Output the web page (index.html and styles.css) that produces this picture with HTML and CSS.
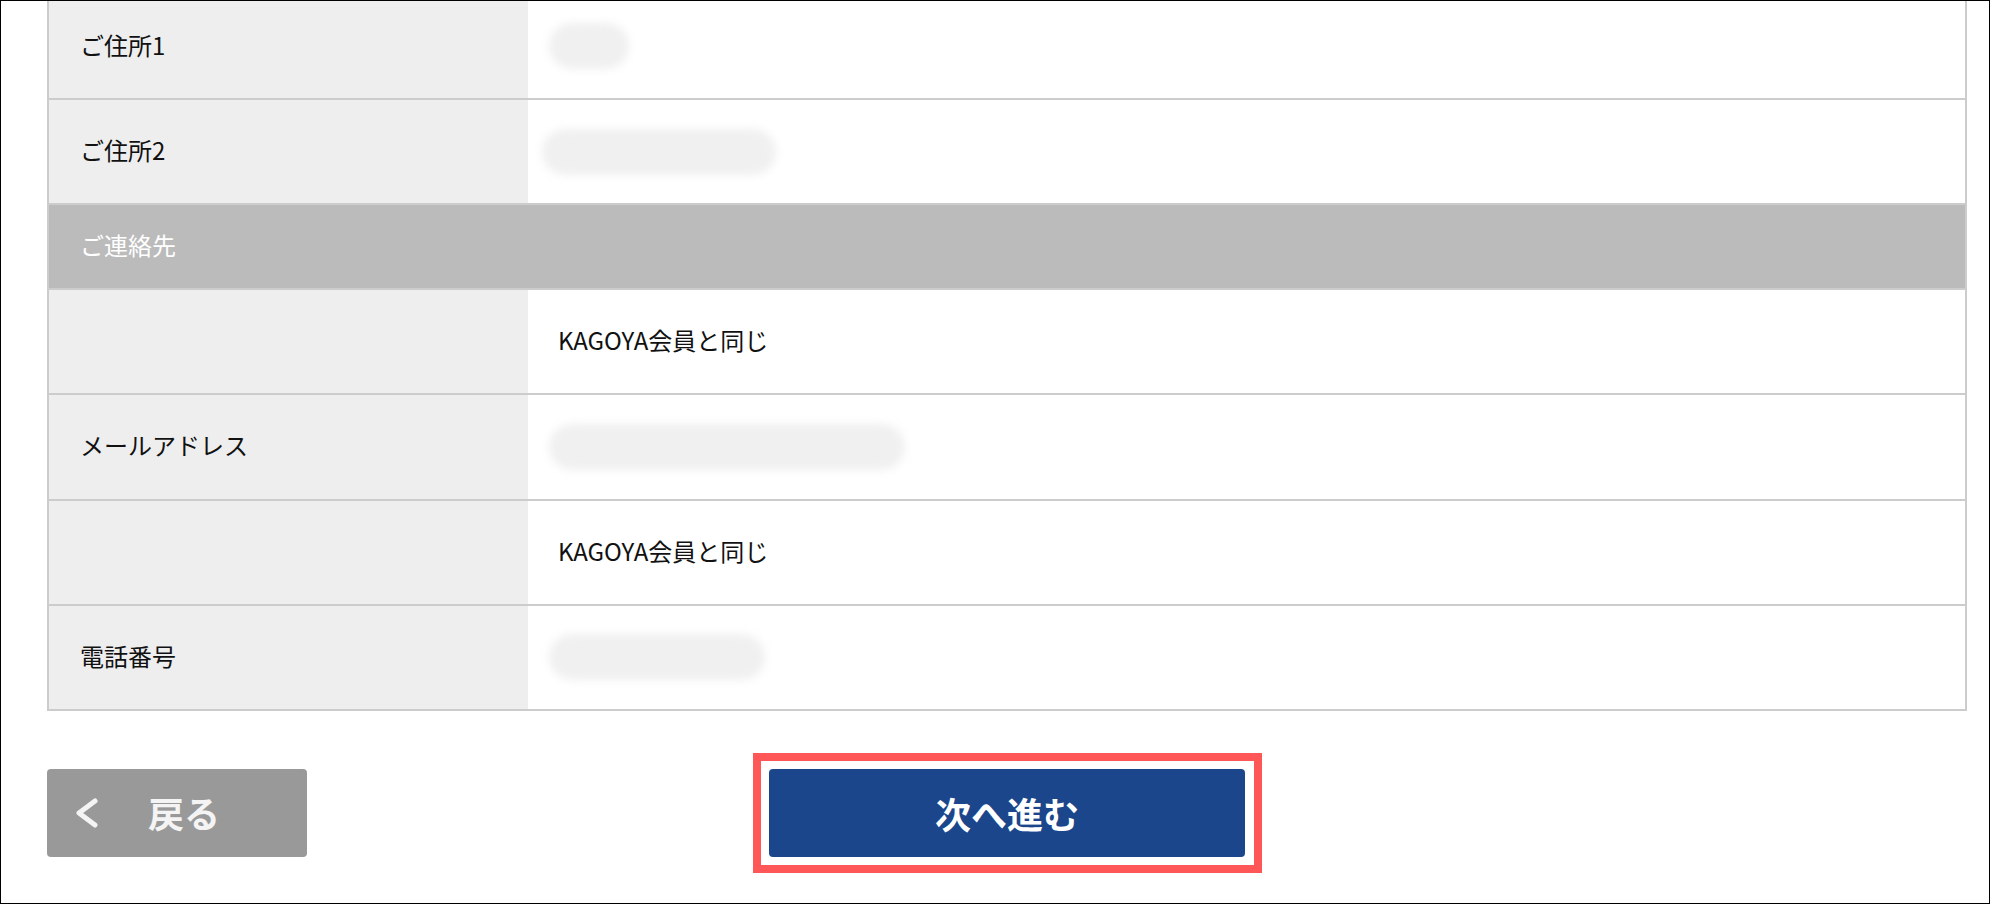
FILE: index.html
```html
<!DOCTYPE html>
<html lang="ja">
<head>
<meta charset="utf-8">
<title>ご連絡先の確認</title>
<link rel="stylesheet" href="styles.css">
</head>
<body>
<div class="screen">
  <div class="form-table">
    <div class="row">
      <div class="label">ご住所1</div>
      <div class="value"><span class="blur blur-addr1"></span></div>
    </div>
    <div class="row">
      <div class="label">ご住所2</div>
      <div class="value"><span class="blur blur-addr2"></span></div>
    </div>
    <div class="section">ご連絡先</div>
    <div class="row">
      <div class="label"></div>
      <div class="value">KAGOYA会員と同じ</div>
    </div>
    <div class="row">
      <div class="label">メールアドレス</div>
      <div class="value"><span class="blur blur-mail"></span></div>
    </div>
    <div class="row">
      <div class="label"></div>
      <div class="value">KAGOYA会員と同じ</div>
    </div>
    <div class="row">
      <div class="label">電話番号</div>
      <div class="value"><span class="blur blur-tel"></span></div>
    </div>
  </div>
  <div class="actions">
    <button class="btn btn-back" type="button">
      <svg class="chev" width="26" height="32" viewBox="0 0 26 32" aria-hidden="true"><polyline points="21,4 5,16 21,28" fill="none" stroke="#f4f4f4" stroke-width="5" stroke-linecap="round" stroke-linejoin="round"/></svg>
      <span class="back-text">戻る</span>
    </button>
    <button class="btn btn-next" type="button">次へ進む</button>
  </div>
</div>
</body>
</html>
```

FILE: styles.css
```css
html, body {
  margin: 0;
  padding: 0;
  background: #fff;
}

.screen {
  box-sizing: border-box;
  width: 1990px;
  height: 904px;
  border: 1px solid #000;
  overflow: hidden;
  padding: 0 22px 0 46px;
  font-family: "Noto Sans CJK JP", "Noto Sans", sans-serif;
  color: #111;
}

.form-table {
  margin-top: -8.2px;
  border: 2px solid #cccccc;
  border-bottom: none;
}

.row {
  display: grid;
  grid-template-columns: 479px 1fr;
  height: 103.2px;
  border-bottom: 2px solid #cccccc;
  font-size: 24px;
}

.label {
  background: #eeeeee;
  padding: 0 0 4px 31px;
  display: flex;
  align-items: center;
}

.value {
  background: #fff;
  padding: 0 0 4px 30px;
  display: flex;
  align-items: center;
}

.section {
  box-sizing: border-box;
  height: 85px;
  background: #bbbbbb;
  color: #fff;
  font-size: 24px;
  padding: 0 0 4px 31px;
  display: flex;
  align-items: center;
  border-bottom: 2px solid #cccccc;
}

.blur {
  display: inline-block;
  height: 46px;
  margin-top: 4px;
  border-radius: 24px;
  background: #f0f0f0;
  filter: blur(4px);
}

.blur-addr1 {
  width: 80px;
  margin-left: -9px;
}

.blur-addr2 {
  width: 234px;
  margin-left: -16px;
}

.blur-mail {
  width: 356px;
  margin-left: -9px;
}

.blur-tel {
  width: 216px;
  margin-left: -9px;
}

.actions {
  margin-top: 58px;
  display: grid;
  grid-template-columns: 1fr 476px 1fr;
  align-items: start;
}

.btn {
  height: 88px;
  border: none;
  border-radius: 4px;
  color: #fff;
  font-family: "Noto Sans CJK JP", "Noto Sans", sans-serif;
  font-weight: 700;
  font-size: 36px;
  cursor: pointer;
}

.btn-back {
  justify-self: start;
  width: 260px;
  background: #999999;
  display: flex;
  align-items: center;
  padding: 0 0 0 75px;
  padding-left: 27px;
  color: #f4f4f4;
}

.chev {
  display: block;
  flex: none;
  margin-right: 48px;
}

.back-text {
  line-height: 1;
  padding-bottom: 2px;
}

.btn-next {
  grid-column: 2;
  width: 476px;
  background: #1b468c;
  position: relative;
}

.btn-next::after {
  content: "";
  position: absolute;
  inset: -16px -17px -16px -16px;
  border: 8px solid #ff5757;
  pointer-events: none;
}
```
